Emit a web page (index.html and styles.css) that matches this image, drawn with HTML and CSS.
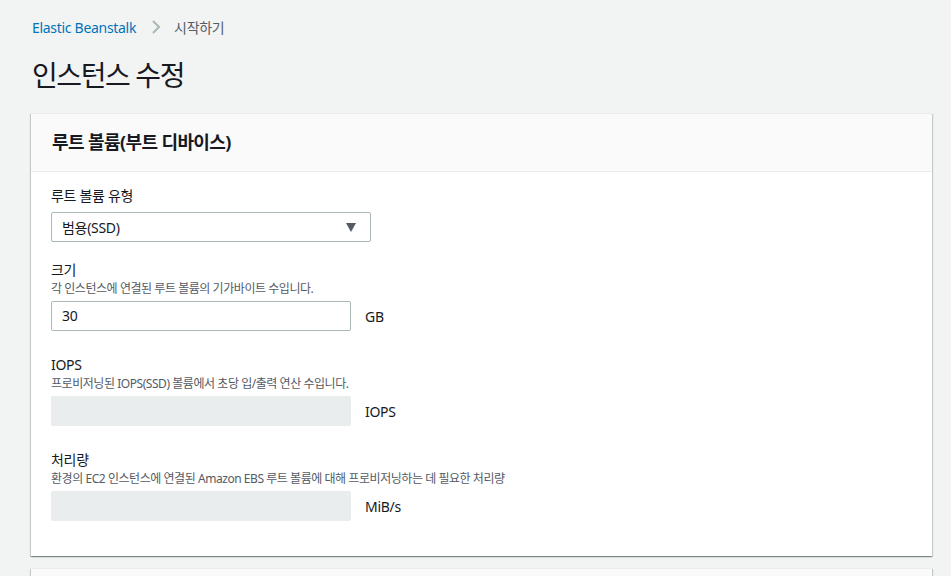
FILE: index.html
```html
<!DOCTYPE html>
<html lang="ko">
<head>
    <meta charset="UTF-8">
    <meta name="viewport" content="width=device-width, initial-scale=1.0">
    <title>인스턴스 수정</title>
    <link rel="stylesheet" href="styles.css">
</head>
<body>
    <div class="page">
        <nav class="breadcrumb">
            <a class="crumb-link" href="#">Elastic Beanstalk</a>
            <svg class="crumb-sep" width="16" height="16" viewBox="0 0 16 16"><path d="M5 2l6 6-6 6" fill="none" stroke="#aab7b8" stroke-width="2"/></svg>
            <span class="crumb-current">시작하기</span>
        </nav>

        <h1 class="title">인스턴스 수정</h1>

        <div class="card">
            <div class="card-header">루트 볼륨(부트 디바이스)</div>
            <div class="card-body">
                <div class="field">
                    <div class="label">루트 볼륨 유형</div>
                    <div class="control-row">
                        <div class="select">
                            <span>범용(SSD)</span>
                            <span class="arrow"></span>
                        </div>
                    </div>
                </div>

                <div class="field compact">
                    <div class="label">크기</div>
                    <div class="desc">각 인스턴스에 연결된 루트 볼륨의 기가바이트 수입니다.</div>
                    <div class="control-row">
                        <div class="input">30</div>
                        <span class="unit">GB</span>
                    </div>
                </div>

                <div class="field">
                    <div class="label">IOPS</div>
                    <div class="desc">프로비저닝된 IOPS(SSD) 볼륨에서 초당 입/출력 연산 수입니다.</div>
                    <div class="control-row">
                        <div class="input disabled"></div>
                        <span class="unit">IOPS</span>
                    </div>
                </div>

                <div class="field">
                    <div class="label">처리량</div>
                    <div class="desc">환경의 EC2 인스턴스에 연결된 Amazon EBS 루트 볼륨에 대해 프로비저닝하는 데 필요한 처리량</div>
                    <div class="control-row">
                        <div class="input disabled"></div>
                        <span class="unit">MiB/s</span>
                    </div>
                </div>
            </div>
        </div>

        <div class="card next">
            <div class="card-header">&nbsp;</div>
        </div>
    </div>
</body>
</html>
```

FILE: styles.css
```css
body {
    margin: 0;
    background: #f2f3f3;
    font-family: "Noto Sans", "Noto Sans CJK KR", sans-serif;
    color: #16191f;
    letter-spacing: -0.3px;
    overflow: hidden;
}

.page {
    padding: 17px 19px 0 31px;
}

.breadcrumb {
    display: flex;
    align-items: center;
    height: 20px;
    padding-left: 1px;
    font-size: 14px;
}

.crumb-link {
    color: #0073bb;
    text-decoration: none;
}

.crumb-sep {
    margin: 0 10px 0 12px;
}

.crumb-current {
    color: #545b64;
}

.title {
    margin: 20px 0 20px 1px;
    font-size: 28px;
    line-height: 36px;
    font-weight: 400;
    letter-spacing: -1.4px;
}

.card {
    background: #fff;
    border-top: 1px solid #eaeded;
    box-shadow: 0 1px 1px 0 rgba(0, 28, 36, 0.3), 1px 1px 1px 0 rgba(0, 28, 36, 0.15), -1px 1px 1px 0 rgba(0, 28, 36, 0.15);
}

.card-header {
    background: #fafafa;
    border-bottom: 1px solid #eaeded;
    height: 57px;
    line-height: 57px;
    padding-left: 21px;
    font-size: 18px;
    font-weight: 700;
    letter-spacing: -0.6px;
}

.card-body {
    padding: 14px 20px 35px;
}

.field {
    margin-top: 24px;
}

.field:first-child {
    margin-top: 0;
}

.field.compact {
    margin-top: 18px;
}

.label {
    font-size: 14px;
    line-height: 20px;
}

.desc {
    margin-top: 1px;
    font-size: 12px;
    line-height: 16px;
    color: #545b64;
    letter-spacing: -0.45px;
}

.control-row {
    display: flex;
    align-items: center;
    margin-top: 4px;
}

.field:first-child .control-row {
    margin-top: 6px;
}

.select {
    box-sizing: border-box;
    width: 320px;
    height: 30px;
    display: flex;
    align-items: center;
    justify-content: space-between;
    padding: 0 14px 0 10px;
    border: 1px solid #aab7b8;
    border-radius: 2px;
    background: #fff;
    font-size: 14px;
}

.arrow {
    width: 0;
    height: 0;
    border-left: 5.5px solid transparent;
    border-right: 5.5px solid transparent;
    border-top: 9px solid #545b64;
}

.input {
    box-sizing: border-box;
    width: 300px;
    height: 30px;
    line-height: 28px;
    padding-left: 10px;
    border: 1px solid #aab7b8;
    border-radius: 2px;
    background: #fff;
    font-size: 14px;
}

.input.disabled {
    background: #eaeded;
    border-color: #eaeded;
}

.unit {
    margin-left: 14px;
    font-size: 14px;
}

.next {
    margin-top: 12px;
}
```
